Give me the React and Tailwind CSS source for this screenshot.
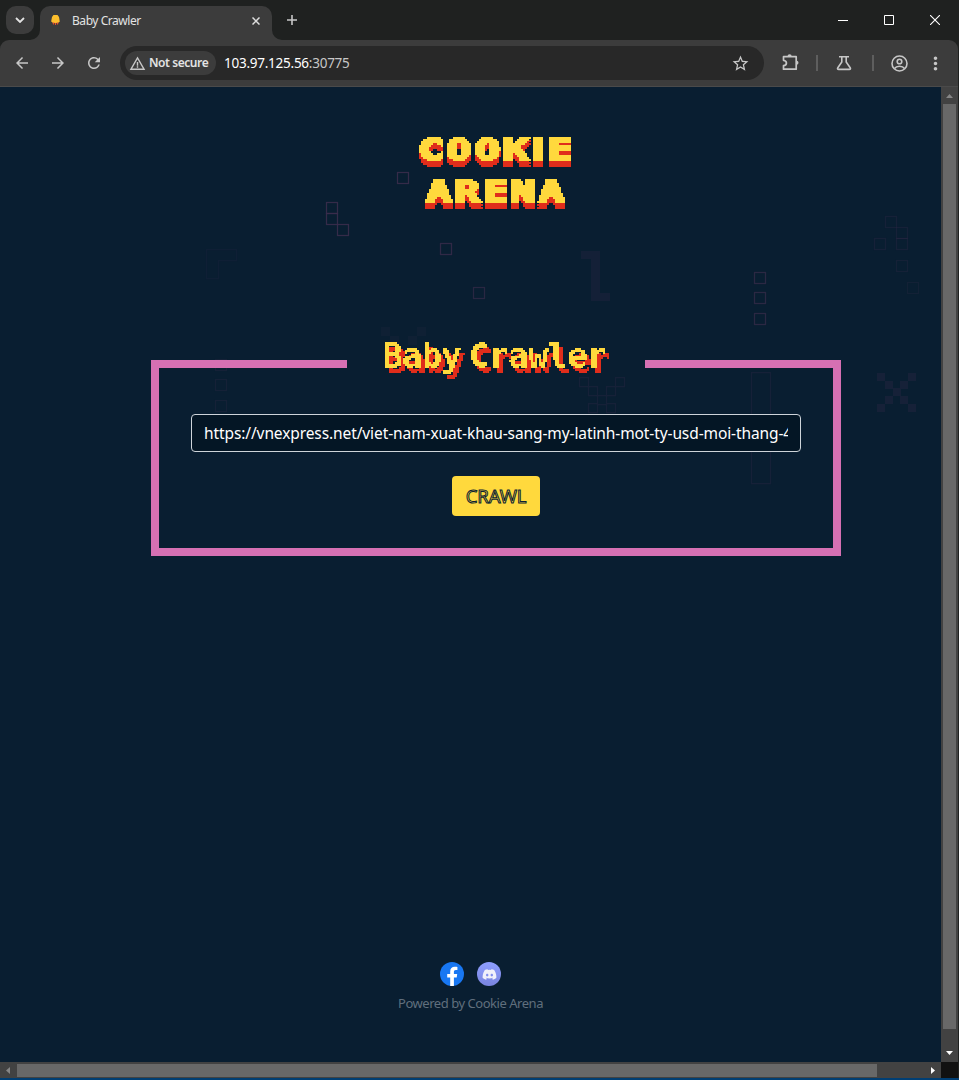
import React from "react";
import { MdArrowBack, MdArrowForward, MdRefresh, MdStarBorder, MdMoreVert, MdWarningAmber } from "react-icons/md";
import { FaDiscord } from "react-icons/fa";

function TabStrip() {
  return (
    <div className="flex h-10 shrink-0 bg-[#1f2120]">
      <div className="mt-[6px] ml-[6px] flex h-7 w-7 items-center justify-center rounded-[10px] bg-[#3c3c3c]">
        <svg width="10" height="6" viewBox="0 0 10 6" fill="none" stroke="#e3e3e3" strokeWidth="1.8">
          <path d="M1 1l4 4 4-4" />
        </svg>
      </div>
      <svg className="mt-[30px] ml-[-4px]" width="10" height="10" viewBox="0 0 10 10">
        <path d="M0 10A10 10 0 0 0 10 0V10Z" fill="#3c3c3c" />
      </svg>
      <div className="mt-[6px] flex h-[34px] w-[232px] items-center rounded-t-[10px] bg-[#3c3c3c] pr-3 pb-[5px] pl-[11px]">
        <svg className="mt-[-2px]" width="9" height="10" viewBox="0 0 9 10">
          <path d="M2.5 0h4l1.5 2 .8 4.5-1.8 1.5H2L.2 6.5 1 2Z" fill="#fdbf2d" />
          <path d="M1.5 7.5h2l-.5 2H2ZM4 8h1v2H4ZM5.5 7.5h2l-.5 2H6Z" fill="#e6512b" />
        </svg>
        <span className="ml-3 flex-1 pt-px font-['Noto_Sans',sans-serif] text-[12px] tracking-[-0.45px] text-[#e3e3e3]">Baby Crawler</span>
        <svg width="8" height="8" viewBox="0 0 8 8" stroke="#dedede" strokeWidth="1.5">
          <path d="M.5.5l7 7M7.5.5l-7 7" />
        </svg>
      </div>
      <svg className="mt-[30px]" width="10" height="10" viewBox="0 0 10 10">
        <path d="M0 0A10 10 0 0 0 10 10H0Z" fill="#3c3c3c" />
      </svg>
      <svg className="mt-[15px] ml-[5px]" width="10" height="10" viewBox="0 0 10 10" stroke="#c7c7c7" strokeWidth="1.6">
        <path d="M5 0v10M0 5h10" />
      </svg>
      <div className="ml-auto flex gap-9 pt-[15px] pr-[19px]">
        <svg width="10" height="10" viewBox="0 0 10 10"><path d="M0 5.5h10" stroke="#fff" /></svg>
        <svg width="10" height="10" viewBox="0 0 10 10"><path d="M.5.5h9v9h-9Z" fill="none" stroke="#fff" /></svg>
        <svg width="10" height="10" viewBox="0 0 10 10"><path d="M0 0l10 10M10 0L0 10" stroke="#fff" strokeWidth="1.1" /></svg>
      </div>
    </div>
  );
}

function Toolbar() {
  return (
    <div className="flex h-[47px] shrink-0 bg-[#1f2120]">
      <div className="flex w-full items-center rounded-t-[9px] border-b border-[#4a4a4a] bg-[#3c3c3c] pl-[13px] text-[#c7c7c7]">
        <MdArrowBack size={18} />
        <MdArrowForward size={18} className="ml-[18px]" />
        <MdRefresh size={18} className="ml-[18px]" />
        <div className="ml-[17px] flex h-[34px] w-[644px] items-center rounded-full bg-[#282828] pr-[14px] pl-[5px] font-['Noto_Sans',sans-serif]">
          <div className="flex h-6 w-[91px] items-center rounded-full bg-[#3c3c3c] pl-1">
            <MdWarningAmber size={17} />
            <span className="ml-[3px] text-[12px] font-semibold tracking-[-0.43px] whitespace-nowrap text-[#e3e3e3]">Not secure</span>
          </div>
          <span className="ml-2 text-[13.5px] tracking-[-0.25px] text-white">
            103.97.125.56<span className="text-[#c7c7c7]">:30775</span>
          </span>
          <MdStarBorder size={19} className="ml-auto" />
        </div>
        <svg className="mt-[-2px] ml-[18px]" width="18" height="17" viewBox="0 0 18 17" fill="none" stroke="#c7c7c7" strokeWidth="1.7">
          <path d="M1.5 2.7H14.2V15.2H1.5V11.7C5.4 11.3 5.4 6.8 1.5 6.3Z" strokeLinejoin="round" />
          <path d="M5.5 2.4a2.1 2.1 0 0 1 4.2 0ZM14.5 6.8a2 2 0 0 1 0 4Z" fill="#c7c7c7" stroke="none" />
        </svg>
        <div className="ml-[16px] h-4 w-[2px] bg-[#5e5e5e]" />
        <svg className="ml-[18px]" width="16" height="16" viewBox="0 0 16 16" fill="none" stroke="#c7c7c7" strokeWidth="1.6">
          <path d="M3 1.8h10M5.8 2v5L1.8 12.8c-.7 1 0 1.6.8 1.6h10.8c.8 0 1.5-.6.8-1.6L10.2 7V2" />
        </svg>
        <div className="ml-5 h-4 w-[2px] bg-[#5e5e5e]" />
        <svg className="ml-[17px]" width="17" height="17" viewBox="0 0 17 17" fill="none" stroke="#c7c7c7" strokeWidth="1.6">
          <circle cx="8.5" cy="8.5" r="7.5" />
          <circle cx="8.5" cy="6.5" r="2.3" />
          <path d="M3.5 13.5c2-3 8-3 10 0" />
        </svg>
        <MdMoreVert size={21} className="ml-[17px]" />
      </div>
      <div className="w-px shrink-0 bg-[#1f2120]" />
    </div>
  );
}

const outlined = [
  [397, 172, 0.9], [326, 202, 0.9], [326, 213, 0.9], [337, 224, 0.9], [440, 243, 0.8], [473, 287, 0.65],
  [754, 272, 0.7], [754, 292, 0.7], [754, 313, 0.7],
  [885, 216, 0.28], [896, 227, 0.28], [874, 238, 0.28], [896, 238, 0.28], [896, 260, 0.25], [907, 282, 0.2],
  [215, 359, 0.25], [215, 379, 0.25], [215, 400, 0.25],
];
const solid = [
  [877, 373], [908, 373], [885, 381], [900, 381], [893, 388], [885, 396], [900, 396], [877, 404], [908, 404],
];

function Backdrop() {
  return (
    <svg className="absolute top-0 left-0" width="941" height="975" viewBox="0 87 941 975" fill="none">
      <defs>
        <filter id="pixels" x="0" y="0" width="100%" height="100%" colorInterpolationFilters="sRGB">
          <feFlood x="1" y="1" width="1" height="1" floodColor="#fff" />
          <feComposite width="2" height="2" />
          <feTile result="grid" />
          <feComposite in="SourceGraphic" in2="grid" operator="in" />
          <feComponentTransfer result="dots">
            <feFuncA type="discrete" tableValues="0 1" />
          </feComponentTransfer>
          <feOffset in="dots" dx="-1" dy="0" result="left" />
          <feOffset in="dots" dx="0" dy="-1" result="up" />
          <feOffset in="dots" dx="-1" dy="-1" result="corner" />
          <feMerge>
            <feMergeNode in="dots" />
            <feMergeNode in="left" />
            <feMergeNode in="up" />
            <feMergeNode in="corner" />
          </feMerge>
        </filter>
      </defs>
      <g stroke="#3b2c4c" strokeWidth="1.25">
        {outlined.map(([x, y, o]) => (
          <rect key={x + "-" + y} x={x + 0.5} y={y + 0.5} width="11" height="11" opacity={o} />
        ))}
        <path d="M206.5 249.5h30v11h-18v18h-12Z" opacity=".14" />
        <path d="M751.5 372.5h19v111h-19Z" opacity=".28" />
        <path d="M579.5 377.5h9v9h-9ZM615.5 377.5h9v9h-9ZM588.5 386.5h9v9h-9ZM606.5 386.5h9v9h-9ZM597.5 395.5h9v9h-9ZM588.5 403.5h9v9h-9ZM606.5 403.5h9v9h-9Z" opacity=".28" />
      </g>
      <g fill="#162138">
        {solid.map(([x, y]) => <rect key={x + "-" + y} x={x} y={y} width="8" height="8" />)}
        <path d="M581 251h19v42h10v8h-19v-42h-10Z" opacity=".85" />
        <path d="M381 327h9v9h-9ZM417 327h9v9h-9ZM390 336h9v9h-9ZM408 336h9v9h-9Z" opacity=".5" />
      </g>
    </svg>
  );
}

function Logo() {
  return (
    <svg
      width="162"
      height="84"
      viewBox="0 0 162 84"
      textAnchor="middle"
      strokeLinejoin="miter"
      className="overflow-visible font-['DejaVu_Sans_Mono',monospace] text-[29px] font-bold [filter:url(#pixels)_drop-shadow(0_3px_0_#e02d1b)_drop-shadow(0_3px_0_#e02d1b)]"
      fill="#ffd93d"
      stroke="#ffd93d"
      strokeWidth="2.6"
    >
      <g transform="scale(1.45 1)">
        <text y="25" x="11.4 30.7 50.3 70 85.2 100.3">
          COOK<tspan className="font-['DejaVu_Sans',sans-serif]">I</tspan>E
        </text>
        <text y="67" x="16.9 36.2 55.9 74.8 94.5">ARENA</text>
      </g>
    </svg>
  );
}

function CrawlerForm() {
  return (
    <fieldset className="mx-auto mt-[121px] h-[216px] w-[690px] border-8 border-[#d670b3] px-8 pt-[26px]">
      <legend className="mx-auto h-12 w-[298px] pl-[36px] font-['DejaVu_Sans_Mono',monospace] text-[34px] leading-[32px] font-bold tracking-[-0.85px] whitespace-nowrap text-[#ffd93d] [filter:url(#pixels)_drop-shadow(4px_5px_0_#e02d1b)] [word-spacing:-11.5px]">
        Baby Crawler
      </legend>
      <input
        aria-label="URL"
        className="block h-[38px] w-full rounded-[4px] border border-[#ced4da] bg-[#041625] px-3 font-['Noto_Sans',sans-serif] text-[15.5px] tracking-[-0.1px] text-white outline-none"
        defaultValue="https://vnexpress.net/viet-nam-xuat-khau-sang-my-latinh-mot-ty-usd-moi-thang-4"
      />
      <button className="mx-auto mt-6 block h-10 w-[88px] rounded-[4px] bg-[#ffd93d] font-['Noto_Sans',sans-serif] text-[18.5px] tracking-[-0.1px] text-[#ffd93d] [-webkit-text-stroke:1px_#0b1e33]">
        CRAWL
      </button>
    </fieldset>
  );
}

function Footer() {
  return (
    <footer className="mt-auto flex flex-col items-center pb-[49px]">
      <div className="flex gap-[13px]">
        <svg width="24" height="24" viewBox="0 0 24 24">
          <circle cx="12" cy="12" r="12" fill="#1877f2" />
          <path d="M16.7 15.5l.5-3.5h-3.3V9.8c0-1 .5-1.9 2-1.9h1.5V5s-1.4-.2-2.7-.2c-2.7 0-4.5 1.6-4.5 4.6V12h-3v3.5h3V24h3.7v-8.5Z" fill="#fff" />
        </svg>
        <div className="flex h-6 w-6 items-center justify-center rounded-full bg-linear-to-b from-[#8e9eff] to-[#7984df]">
          <FaDiscord size={15} color="#f1f1fa" />
        </div>
      </div>
      <p className="mt-[7px] font-['Noto_Sans',sans-serif] text-[13px] leading-5 tracking-[-0.46px] text-[#606f7d]">Powered by Cookie Arena</p>
    </footer>
  );
}

export default function App() {
  return (
    <div className="flex h-[1080px] w-[959px] flex-col overflow-hidden bg-[#1f2120]">
      <TabStrip />
      <Toolbar />
      <div className="flex h-[975px] shrink-0">
        <main className="relative flex w-[941px] flex-col overflow-hidden bg-[#091e31]">
          <Backdrop />
          <div className="relative w-[992px] pt-[48px]">
            <div className="flex justify-center">
              <Logo />
            </div>
            <CrawlerForm />
          </div>
          <Footer />
        </main>
        <div className="flex w-[17px] flex-col items-center bg-[#424242]">
          <svg className="mt-[7px]" width="7" height="4" viewBox="0 0 7 4"><path d="M0 4L3.5 0 7 4Z" fill="#868686" /></svg>
          <div className="mt-[6px] h-[925px] w-[13px] bg-[#686868]" />
          <svg className="mt-[22px]" width="7" height="4" viewBox="0 0 7 4"><path d="M0 0h7L3.5 4Z" fill="#fff" /></svg>
        </div>
      </div>
      <div className="flex h-4 shrink-0">
        <div className="flex w-[941px] items-center bg-[#424242]">
          <svg className="ml-[6px]" width="4" height="7" viewBox="0 0 4 7"><path d="M4 0v7L0 3.5Z" fill="#868686" /></svg>
          <div className="ml-[7px] h-[13px] w-[860px] bg-[#686868]" />
          <svg className="ml-[54px]" width="4" height="7" viewBox="0 0 4 7"><path d="M0 0l4 3.5L0 7Z" fill="#fff" /></svg>
        </div>
        <div className="w-[17px] bg-[#111]" />
      </div>
      <div className="h-[2px] shrink-0 bg-[#003e73]" />
    </div>
  );
}
